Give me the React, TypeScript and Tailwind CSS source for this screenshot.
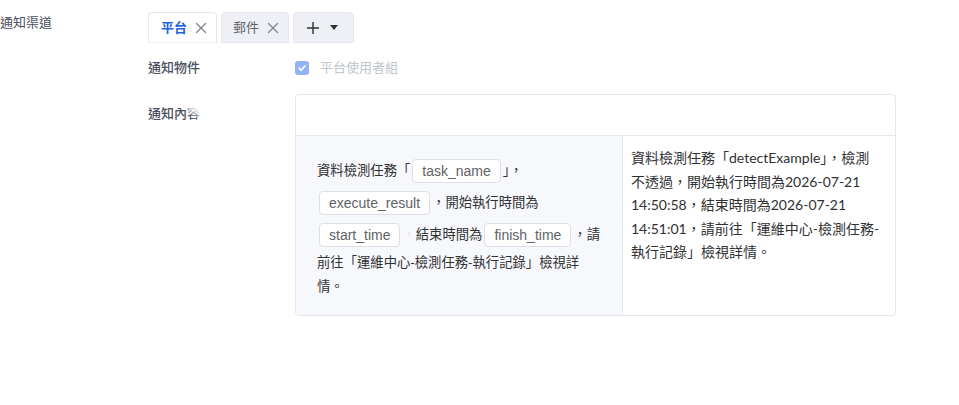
import React from "react";

function XIcon({ className }: { className?: string }) {
  return (
    <svg viewBox="0 0 12 12" className={className} fill="none" stroke="currentColor" strokeWidth="1.2" strokeLinecap="round">
      <path d="M1.5 1.5 L10.5 10.5 M10.5 1.5 L1.5 10.5" />
    </svg>
  );
}

function Chip({ children }: { children: React.ReactNode }) {
  return (
    <span className="inline-block h-[24px] leading-[22px] px-[9px] mx-[2px] my-[4px] align-middle border border-[#dcdfe6] rounded-[4px] bg-white text-[14px] text-[#606266] font-['Liberation_Sans',sans-serif]">
      {children}
    </span>
  );
}

export default function App() {
  return (
    <div className="w-[959px] h-[405px] bg-white font-['Liberation_Sans','Noto_Sans_CJK_TC',sans-serif] overflow-hidden">
      <div className="flex pt-[12px]">
        <div className="w-[148px] shrink-0 text-[13px] leading-[20px] pt-[1px] text-[#4b5160]">通知渠道</div>
        <div className="flex flex-col">
          {/* tabs */}
          <div className="flex gap-[4px] h-[31px]">
            <div className="flex items-center gap-[8px] pl-[12px] pr-[9px] bg-white border border-[#e4e7ed] border-b-[#eef0f3] rounded-t-[4px] text-[13px]">
              <span className="font-bold text-[#2463d8]">平台</span>
              <XIcon className="w-[12px] h-[12px] text-[#7d8088]" />
            </div>
            <div className="flex items-center gap-[8px] pl-[11px] pr-[9px] bg-[#eef0f5] border border-[#e4e7ed] rounded-t-[4px] text-[13px]">
              <span className="text-[#606266]">郵件</span>
              <XIcon className="w-[12px] h-[12px] text-[#7d8088]" />
            </div>
            <div className="flex items-center gap-[10px] w-[61px] pl-[12px] bg-[#eef0f5] border border-[#e4e7ed] rounded-t-[4px]">
              <svg viewBox="0 0 14 14" className="w-[14px] h-[14px] text-[#303133]" fill="none" stroke="currentColor" strokeWidth="1.4">
                <path d="M7 1 V13 M1 7 H13" />
              </svg>
              <svg viewBox="0 0 8 5" className="w-[8px] h-[5px] text-[#303133]" fill="currentColor">
                <path d="M0 0 H8 L4 5 Z" />
              </svg>
            </div>
          </div>

          {/* 通知物件 */}
          <div className="flex items-center h-[24px] mt-[13px]">
            <div className="w-[147px] shrink-0 text-[13px] font-medium text-[#4b5160]">通知物件</div>
            <div className="flex items-center gap-[11px]">
              <span className="flex items-center justify-center w-[14px] h-[14px] rounded-[3px] bg-[#92b3f6]">
                <svg viewBox="0 0 10 10" className="w-[10px] h-[10px]" fill="none" stroke="white" strokeWidth="1.6" strokeLinecap="round" strokeLinejoin="round">
                  <path d="M2 5.2 L4.2 7.3 L8.2 2.8" />
                </svg>
              </span>
              <span className="text-[13px] text-[#c0c4cc]">平台使用者組</span>
            </div>
          </div>

          {/* 通知內容 */}
          <div className="flex mt-[14px]">
            <div className="w-[147px] shrink-0 pt-[10px]">
              <div className="relative w-[70px] text-[13px] leading-[20px] font-medium text-[#4b5160] whitespace-nowrap">
                通知內容
                <span className="absolute top-0 left-[40px] w-[30px] h-[20px] bg-gradient-to-bl from-white from-45% to-transparent to-80%" />
              </div>
            </div>
            <div className="w-[601px] h-[222px] border border-[#e4e7ed] rounded-[4px] flex flex-col">
              <div className="h-[41px] border-b border-[#e4e7ed]" />
              <div className="flex h-[179px]">
                <div className="w-[327px] shrink-0 bg-[#f7f8fb] border-r border-[#e4e7ed] pl-[21px] pr-[20px] pt-[19px]">
                  <p className="text-[13.33px] leading-[24px] text-[#303133]">
                    資料檢測任務「<Chip>task_name</Chip>」，<Chip>execute_result</Chip>，開始執行時間為<Chip>start_time</Chip>
                    <span className="text-[#f4e4d2]">，</span>結束時間為<Chip>finish_time</Chip>，請前往「運維中心-檢測任務-執行記錄」檢視詳情。
                  </p>
                </div>
                <div className="flex-1 pl-[8px] pr-[14px] pt-[10px] text-[14px] leading-[23.5px] text-[#303133] font-['Lato','Noto_Sans_CJK_TC',sans-serif]">
                  資料檢測任務「detectExample」，檢測不透過，開始執行時間為2026-07-21 14:50:58，結束時間為2026-07-21 14:51:01，請前往「運維中心-檢測任務-執行記錄」檢視詳情。
                </div>
              </div>
            </div>
          </div>
        </div>
      </div>
    </div>
  );
}
